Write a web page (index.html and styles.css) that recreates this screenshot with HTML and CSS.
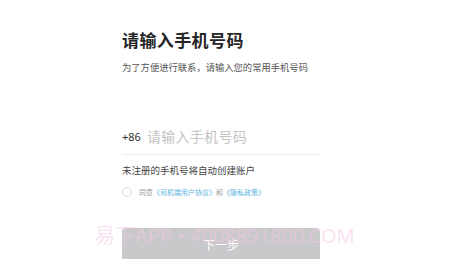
FILE: index.html
```html
<!DOCTYPE html>
<html>
<head>
<meta charset="utf-8">
<link rel="stylesheet" href="styles.css">
</head>
<body>
<div class="page">
  <div class="col">
    <h1 class="title">请输入手机号码</h1>
    <p class="sub">为了方便进行联系，请输入您的常用手机号码</p>
    <div class="phone">
      <span class="cc">+86</span>
      <span class="ph">请输入手机号码</span>
    </div>
    <p class="note">未注册的手机号将自动创建账户</p>
    <div class="agree">
      <span class="radio"></span>
      <span class="agtext">同意<span class="link">《司机端用户协议》</span>和<span class="link">《隐私政策》</span></span>
    </div>
    <div class="btn">下一步</div>
  </div>
  <div class="wm">易下APP • 4008891800.COM</div>
</div>
</body>
</html>
```
FILE: styles.css
```css
html, body { margin: 0; padding: 0; background: #fff; }
body { font-family: "Noto Sans CJK SC", "Noto Sans", sans-serif; width: 449px; height: 259px; overflow: hidden; }
.page { position: relative; width: 449px; height: 259px; }
.col { margin-left: 122px; width: 198px; padding-top: 28px; display: flex; flex-direction: column; }
.title { margin: 0; font-size: 17px; line-height: 24px; font-weight: 700; color: #262626; letter-spacing: 0.4px; }
.sub { margin: 9px 0 0; font-size: 9.3px; line-height: 12px; color: #555; }
.phone { margin-top: 53px; display: flex; align-items: center; gap: 6px; height: 20px; padding-bottom: 8px; border-bottom: 1px solid #ececec; }
.cc { font-size: 11px; color: #333; font-family: "Noto Sans", sans-serif; }
.ph { font-size: 14px; color: #c4c4c4; letter-spacing: 0.3px; }
.note { margin: 8px 0 0; font-size: 9.5px; line-height: 14px; color: #444; }
.agree { margin-top: 8px; display: flex; align-items: center; gap: 7px; height: 14px; }
.radio { width: 8px; height: 8px; border: 1px solid #ddd; border-radius: 50%; }
.agtext { font-size: 7px; color: #999; }
.link { color: #5ab4e0; }
.btn { margin-top: 29px; height: 36px; border-radius: 4px; background: #c9c9cb; color: #fff; font-size: 12px; display: flex; align-items: center; justify-content: center; padding-bottom: 4px; box-sizing: border-box; }
.wm { position: absolute; left: 95px; top: 220px; font-family: "Noto Sans", "Noto Sans CJK SC", sans-serif; font-size: 20px; color: rgba(246, 200, 230, 0.5); white-space: nowrap; }
```
